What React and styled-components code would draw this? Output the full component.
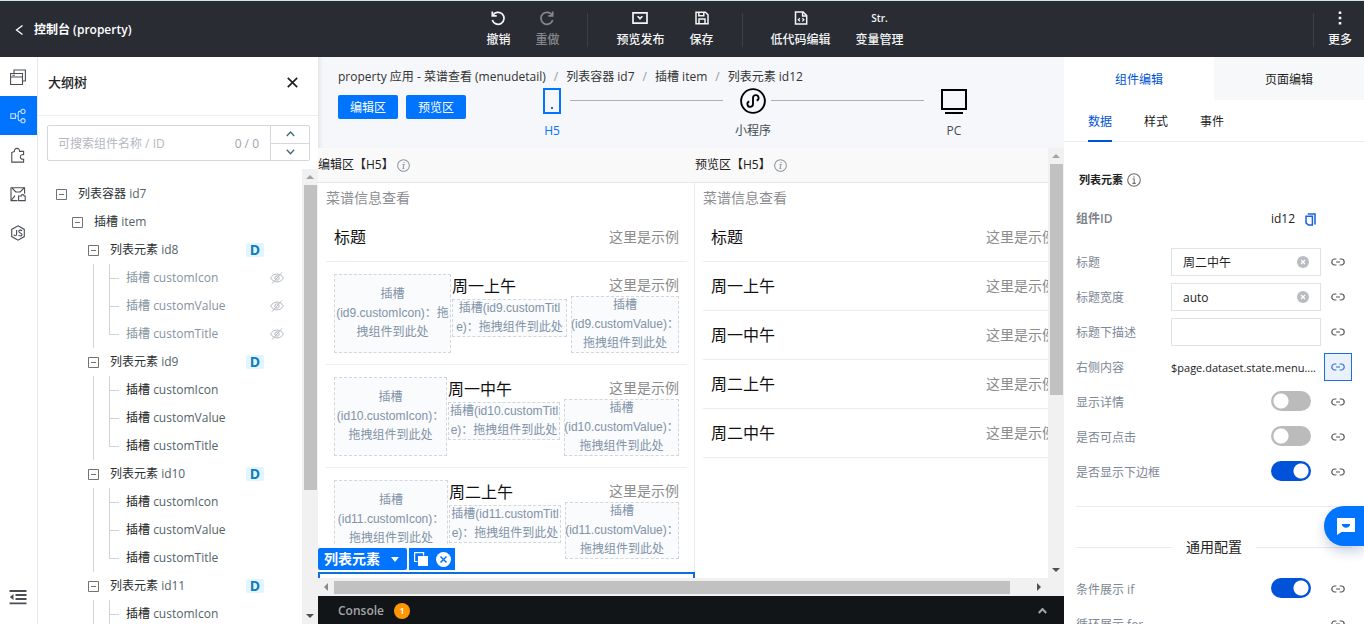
import React, { useState } from 'react';
import styled, { createGlobalStyle } from 'styled-components';

// STYLE
const GlobalStyle = createGlobalStyle`
  * {
    box-sizing: border-box;
  }

  body {
    margin: 0;
    color: #222;
    font-family: 'Open Sans', 'Noto Sans CJK SC', sans-serif;
    font-size: 12px;
    line-height: 20px;
  }

  button,
  input {
    font: inherit;
    color: inherit;
    margin: 0;
    padding: 0;
    border: none;
    background: none;
  }

  button {
    cursor: pointer;
  }
`;

const Page = styled.div`
  height: 100vh;
  display: flex;
  flex-direction: column;
  overflow: hidden;
  background: #fff;
`;

const Header = styled.header`
  display: grid;
  grid-template-columns: 1fr auto 1fr;
  align-items: center;
  flex: none;
  height: 57px;
  padding-top: 2px;
  border-top: 1px solid #d5e2e8;
  background: #292c33;
  color: #f4f5f6;
`;

const BackLink = styled.a`
  display: flex;
  align-items: center;
  gap: 10px;
  padding-left: 14px;
  color: #fff;
  font-weight: 600;
  text-decoration: none;
`;

const Tools = styled.nav`
  display: flex;
  align-items: center;
  gap: 1px;
  margin-left: 26px;
`;

const MoreTools = styled(Tools)`
  justify-content: flex-end;
  margin-left: 0;
`;

const ToolButton = styled.button`
  display: flex;
  flex-direction: column;
  align-items: center;
  gap: 4px;
  padding: 0 12px;
  font-weight: 500;
  opacity: ${props => (props.disabled ? 0.45 : 1)};
`;

const ToolIcon = styled.span`
  display: flex;
  align-items: center;
  justify-content: center;
  height: 16px;
  font-size: 10px;
  font-weight: 600;
`;

const Divider = styled.span`
  width: 1px;
  height: 34px;
  margin: 0 ${props => (props.$tight ? '1px' : '15px')};
  background: #3c3f46;
`;

const Body = styled.div`
  flex: 1;
  min-height: 0;
  display: flex;
`;

const Rail = styled.nav`
  display: flex;
  flex-direction: column;
  flex: none;
  width: 38px;
  border-right: 1px solid #e8e8e8;
`;

const RailButton = styled.button`
  display: flex;
  align-items: center;
  justify-content: center;
  height: 39px;
  padding-right: 2px;
  color: ${props => (props.$active ? '#bfe0ff' : '#4a4f55')};
  background: ${props => (props.$active ? '#0073ff' : 'transparent')};
`;

const RailBottom = styled(RailButton)`
  margin-top: auto;
  margin-bottom: 7px;
`;

const TreePanel = styled.aside`
  display: flex;
  flex-direction: column;
  flex: none;
  width: 280px;
`;

const TreeHead = styled.div`
  display: flex;
  align-items: center;
  justify-content: space-between;
  flex: none;
  height: 59px;
  padding: 0 20px 8px 10px;
  border-bottom: 1px solid #eee;
`;

const TreeTitle = styled.h2`
  margin: 0;
  font-size: 13px;
  font-weight: 500;
`;

const IconButton = styled.button`
  display: flex;
  align-items: center;
  justify-content: center;
`;

const SearchBox = styled.div`
  display: flex;
  flex: none;
  height: 36px;
  margin: 9px 8px 8px 9px;
  border: 1px solid #d4d7db;
  border-radius: 2px;
`;

const SearchInput = styled.input`
  flex: 1;
  min-width: 0;
  padding: 2px 0 0 10px;
  outline: none;

  &::placeholder {
    color: #b4b8bd;
  }
`;

const SearchCount = styled.span`
  padding-right: 11px;
  color: #a0a4aa;
  line-height: 36px;
`;

const Stepper = styled.div`
  display: flex;
  flex-direction: column;
  width: 39px;
  border-left: 1px solid #d4d7db;
  color: #3f6a70;
`;

const StepButton = styled(IconButton)`
  flex: 1;

  & + & {
    border-top: 1px solid #d4d7db;
  }
`;

const TreeBody = styled.div`
  flex: 1;
  min-height: 0;
  display: flex;
`;

const TreeList = styled.div`
  flex: 1;
  padding: 11px 0 0 18px;
  overflow: hidden;
`;

const TreeRow = styled.div`
  display: flex;
  align-items: center;
  gap: 11px;
  height: 28px;
  padding-left: ${props => props.$depth * 16}px;
  padding-right: 38px;
  color: #2a2f33;
`;

const NodeId = styled.span`
  color: ${props => (props.$muted ? '#8494a0' : '#52646a')};
`;

const DataTag = styled.span`
  width: 18px;
  height: 14px;
  margin-left: auto;
  border-radius: 2px;
  background: #e4f4fd;
  color: #0c7dc0;
  font-size: 14px;
  font-weight: 700;
  line-height: 14px;
  text-align: center;
`;

const LeafGroup = styled.div`
  margin-left: 37px;
  border-left: 1px solid #d0d3d6;
`;

const LeafRow = styled.div`
  display: flex;
  align-items: center;
  height: 28px;
  padding: 0 18px 0 15px;
  color: ${props => (props.$muted ? '#8494a0' : '#222')};

  svg {
    margin-left: auto;
  }
`;

const Branch = styled.span`
  width: 10px;
  height: 28px;
  margin-right: 7px;
  background: linear-gradient(#d0d3d6, #d0d3d6) 0 0 / 1px
      ${props => (props.$last ? '14px' : '28px')} no-repeat,
    linear-gradient(#d0d3d6, #d0d3d6) 0 14px / 10px 1px no-repeat;
`;

const VerticalBar = styled.div`
  display: flex;
  flex-direction: column;
  align-items: center;
  justify-content: space-between;
  flex: none;
  width: 16px;
  background: #f1f1f1;
`;

const BarArrow = styled.span`
  display: flex;
  align-items: center;
  justify-content: center;
  width: 16px;
  height: 16px;
`;

const VerticalTrack = styled.div`
  flex: 1;
  width: 13px;
`;

const VerticalThumb = styled.div`
  height: ${props => props.$size};
  background: #c1c1c1;
`;

const HorizontalBar = styled.div`
  display: flex;
  align-items: center;
  flex: none;
  height: 18px;
  padding-right: 17px;
  background: #f1f1f1;
`;

const HorizontalTrack = styled.div`
  flex: 1;
`;

const HorizontalThumb = styled.div`
  width: ${props => props.$size};
  height: 13px;
  background: #c1c1c1;
`;

const Center = styled.main`
  flex: 1;
  min-width: 0;
  display: flex;
  flex-direction: column;
  background: #f9f9fa;
`;

const CenterTop = styled.div`
  flex: none;
  height: 91px;
  padding-top: 9px;
  background: #f5f7fa;
  box-shadow: inset 4px 0 4px -3px #d8dade;
`;

const Breadcrumb = styled.nav`
  display: flex;
  gap: 8px;
  height: 22px;
  padding-left: 20px;
  line-height: 22px;
  white-space: nowrap;
`;

const Crumb = styled.a`
  color: #333;
  text-decoration: none;
`;

const Slash = styled.span`
  color: #999;
`;

const DeviceRow = styled.div`
  display: flex;
  align-items: flex-start;
  padding: 0 92px 0 20px;
`;

const AreaButton = styled.button`
  width: 60px;
  height: 24px;
  margin: 7px 8px 0 0;
  padding-top: 2px;
  border-radius: 2px;
  background: #0073ff;
  color: #fff;
`;

const Devices = styled.div`
  flex: 1;
  display: flex;
  margin-left: 60px;
`;

const Device = styled.button`
  display: flex;
  flex-direction: column;
  align-items: center;
  width: 36px;
  gap: 7px;
  color: ${props => (props.$active ? '#0073ff' : '#444b52')};
  white-space: nowrap;
`;

const DeviceLine = styled.span`
  flex: 1;
  height: 1px;
  margin: 12px 12px 0 0;
  background: #aab0b6;
`;

const CanvasArea = styled.div`
  flex: 1;
  min-height: 0;
  display: flex;
`;

const Canvas = styled.div`
  flex: 1;
  min-width: 0;
  display: flex;
  overflow: hidden;
`;

const PaneColumn = styled.section`
  display: flex;
  flex-direction: column;
  flex: none;
  width: 377px;
`;

const PaneLabel = styled.h3`
  display: flex;
  align-items: center;
  flex: none;
  gap: 3px;
  height: 34px;
  margin: 0;
  font-size: 12px;
  font-weight: 400;
`;

const Pane = styled.div`
  flex: 1;
  padding: 0 8px;
  border-top: 1px solid #e6e6e6;
  background: #fff;
  box-shadow: inset -1px 0 #ececec;
`;

const PaneTitle = styled.div`
  height: 30px;
  color: #8c8e91;
  font-size: 14px;
  line-height: 30px;
`;

const Cell = styled.div`
  display: flex;
  align-items: center;
  justify-content: space-between;
  height: 49px;
  padding: 0 8px;
  border-bottom: 1px solid #ebedf0;
`;

const CellTitle = styled.div`
  color: #111;
  font-size: 16px;
  line-height: 25px;
`;

const CellValue = styled.div`
  color: #8c8c8c;
  font-size: 14px;
  line-height: 22px;
  text-align: right;
`;

const SlotCell = styled.div`
  display: grid;
  grid-template-columns: ${props => props.$columns};
  height: 103px;
  padding: 12px 8px;
  border-bottom: 1px solid ${props => (props.$last ? 'transparent' : '#ebedf0')};
`;

const Slot = styled.div`
  outline: 1px dashed #d3d7db;
  outline-offset: -1px;
  background: #f9fbfd;
  color: #8292a6;
  font-family: 'Liberation Sans', 'Noto Sans CJK SC', sans-serif;
  line-height: 19px;
  text-align: center;
  white-space: nowrap;
`;

const IconSlot = styled(Slot)`
  margin-right: 1px;
  padding: 11px 0;
`;

const TitleSlot = styled(Slot)`
  margin-right: 4px;
`;

const Selected = styled.div`
  position: relative;
  height: 60px;
  margin: 1px -8px 0;
  border: 2px solid #0b6fe0;
`;

const SelectedBar = styled.div`
  position: absolute;
  bottom: 100%;
  left: -2px;
  display: flex;
  gap: 2px;
  margin-bottom: 4px;
  border-top: 3px solid #fff;
  background: #fff;
`;

const SelectedName = styled.button`
  display: flex;
  align-items: center;
  gap: 11px;
  height: 22px;
  padding: 0 8px 0 6px;
  border-radius: 2px;
  background: #0073ff;
  color: #fff;
  font-size: 14px;
  font-weight: 600;
`;

const SelectedTools = styled.div`
  display: flex;
  align-items: center;
  gap: 8px;
  height: 22px;
  padding: 0 4px 0 5px;
  background: #0073ff;
  color: #fff;
`;

const Console = styled.footer`
  display: flex;
  align-items: center;
  flex: none;
  height: 28px;
  padding: 2px 17px 0 20px;
  background: #121518;
  color: #a3a6a8;
  font-weight: 600;
`;

const ConsoleBadge = styled.span`
  width: 16px;
  height: 16px;
  margin: 0 auto 0 10px;
  border-radius: 50%;
  background: #ff9800;
  color: #fff;
  font-size: 9px;
  line-height: 16px;
  text-align: center;
`;

const Inspector = styled.aside`
  flex: none;
  width: 300px;
  overflow: hidden;
  background: #fff;
`;

const Tabs = styled.div`
  display: flex;
`;

const Tab = styled.button`
  flex: 1;
  height: 43px;
  padding-top: 2px;
  background: ${props => (props.$active ? '#fff' : '#f7f8fa')};
  color: ${props => (props.$active ? '#0052d9' : '#222')};
`;

const SubTabs = styled.div`
  display: flex;
  gap: 32px;
  height: 42px;
  padding-left: 24px;
  border-bottom: 1px solid #e8eaed;
`;

const SubTab = styled.button`
  height: 42px;
  padding-top: 4px;
  border-bottom: 2px solid ${props => (props.$active ? '#0052d9' : 'transparent')};
  color: ${props => (props.$active ? '#0052d9' : '#222')};
`;

const SectionTitle = styled.h3`
  display: flex;
  align-items: center;
  gap: 4px;
  height: 20px;
  margin: 28px 0 17px 15px;
  font-size: 11px;
  font-weight: 600;
`;

const Fields = styled.div`
  padding: 0 12px;
`;

const IdRow = styled.div`
  display: flex;
  align-items: center;
  gap: 10px;
  height: 24px;
  margin-bottom: 13px;
  padding-right: 36px;
`;

const IdLabel = styled.span`
  flex: 1;
  color: #7d8289;
  font-weight: 600;
`;

const Field = styled.div`
  display: flex;
  align-items: center;
  gap: 3px;
  height: 35px;
`;

const FieldLabel = styled.label`
  flex: 1;
  padding-top: 2px;
  color: #7d8796;
  white-space: nowrap;
`;

const TextBox = styled.div`
  display: flex;
  align-items: center;
  width: 150px;
  height: 28px;
  padding: 0 11px;
  border: 1px solid #dfe2e6;
`;

const TextInput = styled.input`
  flex: 1;
  min-width: 0;
  padding-top: 2px;
  outline: none;
`;

const BoundValue = styled.output`
  width: 150px;
  padding-top: 2px;
  overflow: hidden;
  font-size: 11px;
  white-space: nowrap;
`;

const LinkButton = styled(IconButton)`
  width: 28px;
  height: 28px;
  border: 1px solid ${props => (props.$bound ? '#1a6fe0' : 'transparent')};
  background: ${props => (props.$bound ? '#eaf1fb' : 'transparent')};
  color: ${props => (props.$bound ? '#2f6fe6' : '#50555b')};
`;

const Toggle = styled.input`
  appearance: none;
  width: 40px;
  height: 20px;
  margin: 0 10px 2px 0;
  border-radius: 10px;
  background: radial-gradient(circle at 10px 10px, #fff 7px, #bbb 8px);
  cursor: pointer;

  &:checked {
    background: radial-gradient(circle at 30px 10px, #fff 7px, #0052d9 8px);
  }
`;

const Rule = styled.hr`
  height: 1px;
  margin: 17px 0 29px;
  border: none;
  background: #e8eaed;
`;

const GroupTitle = styled.h3`
  display: flex;
  align-items: center;
  gap: 14px;
  height: 22px;
  margin: 0 0 13px;
  font-size: 14px;
  font-weight: 400;

  &::before,
  &::after {
    content: '';
    flex: 1;
    height: 1px;
    background: #e8eaed;
  }
`;

const ChatButton = styled.button`
  position: fixed;
  right: 0;
  bottom: 78px;
  display: flex;
  align-items: center;
  width: 40px;
  height: 40px;
  padding-left: 12px;
  border-radius: 20px 0 0 20px;
  background: #0073ff;
  box-shadow: 0 6px 12px rgba(0, 40, 120, 0.2);
`;

// ICONS
const Svg = ({ w = 16, h = w, box, sw = 1, children }) => (
  <svg
    width={w}
    height={h}
    viewBox={box || `0 0 ${w} ${h}`}
    fill='none'
    stroke='currentColor'
    strokeWidth={sw}
    aria-hidden='true'
  >
    {children}
  </svg>
);

const UndoIcon = () => (
  <Svg sw={1.7}>
    <path d='M2.8 5.4A6 6 0 1 1 2.3 10' />
    <path d='M2.3 1.6v4.3h4.4' />
  </Svg>
);

const RedoIcon = () => (
  <Svg sw={1.7}>
    <path d='M13.2 5.4A6 6 0 1 0 13.7 10' />
    <path d='M13.7 1.6v4.3H9.3' />
  </Svg>
);

const PublishIcon = () => (
  <Svg sw={1.7}>
    <path d='M1 2.800h14v10.400H1z' />
    <path d='M5.500 6.600h1.200L8 7.800l1.300-1.200h1.200L8 9.400z' strokeWidth='1' fill='currentColor' />
  </Svg>
);

const SaveIcon = () => (
  <Svg sw={1.5}>
    <path d='M2 2.2h9.4L14 4.8v9H2z' />
    <path d='M4.8 2.4v3.4h5V2.4M5 13.6V9h6v4.6' />
  </Svg>
);

const CodeIcon = () => (
  <Svg sw={1.5}>
    <path d='M2.5 2h7.6l3.6 3.6V14H2.5z' />
    <path d='M9.6 2.2V6h4' />
    <path d='M6.900 8.200L5.300 9.800l1.600 1.600M9.300 8.200l1.600 1.600-1.600 1.600' strokeWidth='1.300' />
  </Svg>
);

const MoreIcon = () => (
  <Svg>
    <path d='M6.7 1.5h2.6v2.6H6.7zM6.7 6.7h2.6v2.6H6.7zM6.7 11.9h2.6v2.6H6.7z' fill='currentColor' stroke='none' />
  </Svg>
);

const WindowsIcon = () => (
  <Svg sw={1.1}>
    <path d='M.6 4.500h11.900v11H.6zM.6 8h11.900M2.500 6.300H5M4 4.500V1h11.400v11h-3' />
  </Svg>
);

const TreeIcon = () => (
  <Svg sw={1.1}>
    <path d='M.8 5.8h4.6v4.6H.8zM5.4 8h2.8M10.8 3.4H9.6C8.600 3.400 8.200 4 8.200 5v6c0 1 .4 1.700 1.400 1.700h1.200' />
    <circle cx='13' cy='3.4' r='2.1' />
    <circle cx='13' cy='12.700' r='2.1' />
  </Svg>
);

const PuzzleIcon = () => (
  <Svg sw={1.1}>
    <path d='M1.800 5.400l2.600-1C4 .6 9.800.2 9.600 4.400h4v3.200c-4.400-.6-4.400 5.400 0 4.600v2.900H1.800z' />
  </Svg>
);

const AssetIcon = () => (
  <Svg sw={1.1}>
    <path d='M7.500 14.600H1V1.800h13.600v6' />
    <path d='M2 2l3.800 4h4.400l3.800-4M1.400 14.200L5 9.600M8.600 14.600V10h2.600c0-1.800 3-1.800 3 0h1v4.600z' />
  </Svg>
);

const JsIcon = () => (
  <Svg sw={1.1}>
    <path d='M8 .8l6.300 3.600v7.200L8 15.200 1.700 11.600V4.400z' />
    <path d='M6.600 5v4.600c0 1.600-2.600 1.600-2.600 0M12 6c-.6-1.200-3.200-1.200-3.200.4S12 7.800 12 9.600s-2.800 1.700-3.400.3' />
  </Svg>
);

const IndentIcon = () => (
  <Svg w={18} sw={1.8}>
    <path d='M.5 2h17M6.500 6h11M6.500 10h11M.5 14.300h17' />
    <path d='M4.500 5v6L.8 8z' fill='currentColor' stroke='none' />
  </Svg>
);

const CloseIcon = () => (
  <Svg w={11} sw={1.7}>
    <path d='M.8.8l9.400 9.400M10.200.8L.8 10.200' />
  </Svg>
);

const Chevron = ({ down, w = 9, sw = 1.3 }) => (
  <Svg w={w} h={6} box='0 0 9 6' sw={sw}>
    <path d={down ? 'M.8.8l3.700 4L8.200.8' : 'M.8 5l3.700-4L8.200 5'} />
  </Svg>
);

const MinusBox = () => (
  <svg width='11' height='11' viewBox='0 0 11 11' fill='none' stroke='#6f7276' aria-hidden='true'>
    <path d='M.5.5h10v10H.5zM3 5.500h5' />
  </svg>
);

const HiddenIcon = () => (
  <svg width='14' height='12' viewBox='0 0 14 12' fill='none' stroke='#b4bac0' aria-hidden='true'>
    <path d='M.6 6C3.500.8 10.500.8 13.400 6 10.500 11.200 3.500 11.200.6 6z' />
    <circle cx='7' cy='6' r='2.200' />
    <path d='M12 .4L2 11.600' />
  </svg>
);

const Arrow = ({ d, color = '#505050' }) => (
  <svg width='8' height='8' viewBox='0 0 8 8' fill={color} aria-hidden='true'>
    <path d={d} />
  </svg>
);

const ARROWS = {
  up: 'M0 6h8L4 2z',
  down: 'M0 2h8L4 6z',
  left: 'M6 0v8L2 4z',
  right: 'M2 0v8l4-4z'
};

const InfoIcon = ({ w = 13, color = '#8d959c', slanted }) => (
  <svg width={w} height={w} viewBox='0 0 14 14' fill='none' stroke={color} strokeWidth='1.100' aria-hidden='true'>
    <circle cx='7' cy='7' r='6.300' />
    <path d={slanted ? 'M6 6h1.500l-1 4.300h1.300M7.600 3.200v1.200' : 'M5.600 6h1.600v4.200M5.400 10.400h3.400M7 3.200v1.300'} />
  </svg>
);

const PhoneIcon = () => (
  <Svg w={18} h={26} sw={2}>
    <path d='M1 1h16v24H1z' />
    <path d='M8 20h2' />
  </Svg>
);

const MiniIcon = () => (
  <svg width='28' height='26' viewBox='0 0 28 28' fill='none' stroke='#000' strokeWidth='2' aria-hidden='true'>
    <circle cx='14' cy='14' r='12.800' />
    <path d='M18 13.500A3 3 0 1 0 14 10.700V17.300A3 3 0 1 1 10 14.500' />
  </svg>
);

const PcIcon = () => (
  <svg width='26' height='26' viewBox='0 0 26 26' fill='none' stroke='#000' strokeWidth='2' aria-hidden='true'>
    <path d='M1 2h24v19H1zM4 25h18' />
  </svg>
);

const LinkIcon = () => (
  <Svg w={14} h={8} sw={1.2}>
    <path d='M5.400 1H3.800a3 3 0 0 0 0 6h1.600M8.600 1h1.600a3 3 0 0 1 0 6H8.600M5 4h4' />
  </Svg>
);

const ClearIcon = () => (
  <svg width='12' height='12' viewBox='0 0 12 12' aria-hidden='true'>
    <circle cx='6' cy='6' r='6' fill='#b9bcc0' />
    <path d='M4 4l4 4M8 4L4 8' stroke='#fff' strokeWidth='1.200' />
  </svg>
);

const CopyIdIcon = () => (
  <svg width='11' height='13' viewBox='0 0 11 13' fill='none' stroke='#1a62dc' strokeWidth='1.500' aria-hidden='true'>
    <path d='M2.800 1h7.200v10.500' />
    <path d='M1 3.200h6.400v8.800H3.400L1 9.800z' />
  </svg>
);

const DuplicateIcon = () => (
  <Svg w={14} sw={1.2}>
    <path d='M3.500 9.500H.6V.6h9v2.800' />
    <path d='M4 4h10v10H4z' fill='currentColor' stroke='none' />
  </Svg>
);

const RemoveIcon = () => (
  <svg width='15' height='15' viewBox='0 0 15 15' aria-hidden='true'>
    <circle cx='7.500' cy='7.500' r='7.500' fill='#fff' />
    <path d='M4.500 4.500l6 6M10.500 4.500l-6 6' stroke='#0073ff' strokeWidth='1.500' />
  </svg>
);

const ChatIcon = () => (
  <svg width='19' height='18' viewBox='0 0 19 18' aria-hidden='true'>
    <path d='M1 1h18v14H5.500L1 18z' fill='#fff' />
    <path d='M5.800 7h8.400c-.4 5-8 5-8.400 0z' fill='#0073ff' />
  </svg>
);

// DATA
const leaves = ['customIcon', 'customValue', 'customTitle'];

const elements = [
  { id: 'id8', muted: true },
  { id: 'id9' },
  { id: 'id10' },
  { id: 'id11' }
];

const crumbs = [
  'property 应用 - 菜谱查看 (menudetail)',
  '列表容器 id7',
  '插槽 item',
  '列表元素 id12'
];

const slotCells = [
  { id: 'id9', title: '周一上午', columns: '118px 1fr 108px', long: true },
  { id: 'id10', title: '周一中午', columns: '114px 1fr 115px' },
  { id: 'id11', title: '周二上午', columns: '115px 1fr 114px' }
];

const previewCells = ['标题', '周一上午', '周一中午', '周二上午', '周二中午'];

const railIcons = [
  { name: '页面', Icon: WindowsIcon },
  { name: '大纲树', Icon: TreeIcon },
  { name: '组件', Icon: PuzzleIcon },
  { name: '素材', Icon: AssetIcon },
  { name: '脚本', Icon: JsIcon }
];

const Tool = ({ icon, label, disabled }) => (
  <ToolButton disabled={disabled}>
    <ToolIcon>{icon}</ToolIcon>
    {label}
  </ToolButton>
);

const TextField = ({ id, label, value }) => {
  const [text, setText] = useState(value);

  return (
    <Field>
      <FieldLabel htmlFor={id}>{label}</FieldLabel>
      <TextBox>
        <TextInput id={id} type='text' value={text} onChange={e => setText(e.target.value)} />
        {text && (
          <IconButton aria-label='清空' onClick={() => setText('')}>
            <ClearIcon />
          </IconButton>
        )}
      </TextBox>
      <LinkButton aria-label='绑定'>
        <LinkIcon />
      </LinkButton>
    </Field>
  );
};

const ToggleField = ({ id, label, on }) => (
  <Field>
    <FieldLabel htmlFor={id}>{label}</FieldLabel>
    <Toggle id={id} type='checkbox' defaultChecked={on} />
    <LinkButton aria-label='绑定'>
      <LinkIcon />
    </LinkButton>
  </Field>
);

const BoundField = ({ id, label, value, bound }) => (
  <Field>
    <FieldLabel htmlFor={id}>{label}</FieldLabel>
    <BoundValue id={id}>{value}</BoundValue>
    <LinkButton $bound={bound} aria-label='绑定'>
      <LinkIcon />
    </LinkButton>
  </Field>
);

const Outline = () => (
  <TreePanel>
    <TreeHead>
      <TreeTitle>大纲树</TreeTitle>
      <IconButton aria-label='关闭'>
        <CloseIcon />
      </IconButton>
    </TreeHead>
    <SearchBox>
      <SearchInput type='text' placeholder='可搜索组件名称 / ID' aria-label='搜索组件' />
      <SearchCount>0 / 0</SearchCount>
      <Stepper>
        <StepButton aria-label='上一个'>
          <Chevron />
        </StepButton>
        <StepButton aria-label='下一个'>
          <Chevron down />
        </StepButton>
      </Stepper>
    </SearchBox>
    <TreeBody>
      <TreeList>
        <TreeRow $depth={0}>
          <MinusBox />
          <span>
            列表容器 <NodeId>id7</NodeId>
          </span>
        </TreeRow>
        <TreeRow $depth={1}>
          <MinusBox />
          <span>
            插槽 <NodeId>item</NodeId>
          </span>
        </TreeRow>
        {elements.map(el => (
          <div key={el.id}>
            <TreeRow $depth={2}>
              <MinusBox />
              <span>
                列表元素 <NodeId>{el.id}</NodeId>
              </span>
              <DataTag>D</DataTag>
            </TreeRow>
            <LeafGroup>
              {leaves.map((leaf, i) => (
                <LeafRow key={leaf} $muted={el.muted}>
                  <Branch $last={i === leaves.length - 1} />
                  <span>
                    插槽 <NodeId $muted={el.muted}>{leaf}</NodeId>
                  </span>
                  {el.muted && <HiddenIcon />}
                </LeafRow>
              ))}
            </LeafGroup>
          </div>
        ))}
      </TreeList>
      <VerticalBar>
        <BarArrow>
          <Arrow d={ARROWS.up} color='#a3a3a3' />
        </BarArrow>
        <VerticalTrack>
          <VerticalThumb $size='72%' />
        </VerticalTrack>
        <BarArrow>
          <Arrow d={ARROWS.down} />
        </BarArrow>
      </VerticalBar>
    </TreeBody>
  </TreePanel>
);

const Workspace = () => (
  <Center>
    <CenterTop>
      <Breadcrumb>
        {crumbs.map((crumb, i) => (
          <React.Fragment key={crumb}>
            {i > 0 && <Slash>/</Slash>}
            <Crumb href='#'>{crumb}</Crumb>
          </React.Fragment>
        ))}
      </Breadcrumb>
      <DeviceRow>
        <AreaButton>编辑区</AreaButton>
        <AreaButton>预览区</AreaButton>
        <Devices>
          <Device $active>
            <PhoneIcon />
            H5
          </Device>
          <DeviceLine />
          <Device>
            <MiniIcon />
            小程序
          </Device>
          <DeviceLine />
          <Device>
            <PcIcon />
            PC
          </Device>
        </Devices>
      </DeviceRow>
    </CenterTop>
    <CanvasArea>
      <Canvas>
        <PaneColumn>
          <PaneLabel>
            编辑区【H5】
            <InfoIcon slanted />
          </PaneLabel>
          <Pane>
            <PaneTitle>菜谱信息查看</PaneTitle>
            <Cell>
              <CellTitle>标题</CellTitle>
              <CellValue>这里是示例</CellValue>
            </Cell>
            {slotCells.map((cell, i) => (
              <SlotCell key={cell.id} $columns={cell.columns} $last={i === slotCells.length - 1}>
                <IconSlot>
                  插槽
                  <br />({cell.id}.customIcon)：{cell.long && '拖'}
                  <br />
                  {!cell.long && '拖'}拽组件到此处
                </IconSlot>
                <div>
                  <CellTitle>{cell.title}</CellTitle>
                  <TitleSlot>
                    插槽({cell.id}.customTitl
                    <br />
                    e)：拖拽组件到此处
                  </TitleSlot>
                </div>
                <div>
                  <CellValue>这里是示例</CellValue>
                  <Slot>
                    插槽
                    <br />({cell.id}.customValue)：
                    <br />
                    拖拽组件到此处
                  </Slot>
                </div>
              </SlotCell>
            ))}
            <Selected>
              <SelectedBar>
                <SelectedName>
                  列表元素
                  <Arrow d='M0 2h8L4 7z' color='#fff' />
                </SelectedName>
                <SelectedTools>
                  <IconButton aria-label='复制'>
                    <DuplicateIcon />
                  </IconButton>
                  <IconButton aria-label='删除'>
                    <RemoveIcon />
                  </IconButton>
                </SelectedTools>
              </SelectedBar>
            </Selected>
          </Pane>
        </PaneColumn>
        <PaneColumn>
          <PaneLabel>
            预览区【H5】
            <InfoIcon slanted />
          </PaneLabel>
          <Pane>
            <PaneTitle>菜谱信息查看</PaneTitle>
            {previewCells.map(title => (
              <Cell key={title}>
                <CellTitle>{title}</CellTitle>
                <CellValue>这里是示例</CellValue>
              </Cell>
            ))}
          </Pane>
        </PaneColumn>
      </Canvas>
      <VerticalBar>
        <BarArrow>
          <Arrow d={ARROWS.up} color='#a3a3a3' />
        </BarArrow>
        <VerticalTrack>
          <VerticalThumb $size='58%' />
        </VerticalTrack>
        <BarArrow>
          <Arrow d={ARROWS.down} />
        </BarArrow>
      </VerticalBar>
    </CanvasArea>
    <HorizontalBar>
      <BarArrow>
        <Arrow d={ARROWS.left} color='#8a8a8a' />
      </BarArrow>
      <HorizontalTrack>
        <HorizontalThumb $size='97%' />
      </HorizontalTrack>
      <BarArrow>
        <Arrow d={ARROWS.right} />
      </BarArrow>
    </HorizontalBar>
    <Console>
      Console
      <ConsoleBadge>1</ConsoleBadge>
      <IconButton aria-label='展开'>
        <Chevron sw={2} />
      </IconButton>
    </Console>
  </Center>
);

const PropertyPanel = () => (
  <Inspector>
    <Tabs>
      <Tab $active>组件编辑</Tab>
      <Tab>页面编辑</Tab>
    </Tabs>
    <SubTabs>
      <SubTab $active>数据</SubTab>
      <SubTab>样式</SubTab>
      <SubTab>事件</SubTab>
    </SubTabs>
    <SectionTitle>
      列表元素
      <InfoIcon w={14} color='#6d6d6d' />
    </SectionTitle>
    <Fields>
      <IdRow>
        <IdLabel>组件ID</IdLabel>
        id12
        <IconButton aria-label='复制ID'>
          <CopyIdIcon />
        </IconButton>
      </IdRow>
      <TextField id='title' label='标题' value='周二中午' />
      <TextField id='titleWidth' label='标题宽度' value='auto' />
      <TextField id='titleDesc' label='标题下描述' value='' />
      <BoundField id='rightContent' label='右侧内容' value='$page.dataset.state.menu....' bound />
      <ToggleField id='showDetail' label='显示详情' />
      <ToggleField id='clickable' label='是否可点击' />
      <ToggleField id='bottomBorder' label='是否显示下边框' on />
      <Rule />
      <GroupTitle>通用配置</GroupTitle>
      <ToggleField id='showIf' label='条件展示 if' on />
      <BoundField id='loopFor' label='循环展示 for' />
    </Fields>
  </Inspector>
);

const App = () => (
  <Page>
    <GlobalStyle />
    <Header>
      <BackLink href='#'>
        <Svg w={10} h={12} sw={1.3}>
          <path d='M8.500 1.500L2.500 6l6 4.500' />
        </Svg>
        控制台 (property)
      </BackLink>
      <Tools>
        <Tool icon={<UndoIcon />} label='撤销' />
        <Tool icon={<RedoIcon />} label='重做' disabled />
        <Divider />
        <Tool icon={<PublishIcon />} label='预览发布' />
        <Tool icon={<SaveIcon />} label='保存' />
        <Divider />
        <Tool icon={<CodeIcon />} label='低代码编辑' />
        <Tool icon='Str.' label='变量管理' />
      </Tools>
      <MoreTools>
        <Divider $tight />
        <Tool icon={<MoreIcon />} label='更多' />
      </MoreTools>
    </Header>
    <Body>
      <Rail>
        {railIcons.map(({ name, Icon }) => (
          <RailButton key={name} $active={name === '大纲树'} aria-label={name}>
            <Icon />
          </RailButton>
        ))}
        <RailBottom aria-label='收起'>
          <IndentIcon />
        </RailBottom>
      </Rail>
      <Outline />
      <Workspace />
      <PropertyPanel />
    </Body>
    <ChatButton aria-label='在线客服'>
      <ChatIcon />
    </ChatButton>
  </Page>
);

export default App;
